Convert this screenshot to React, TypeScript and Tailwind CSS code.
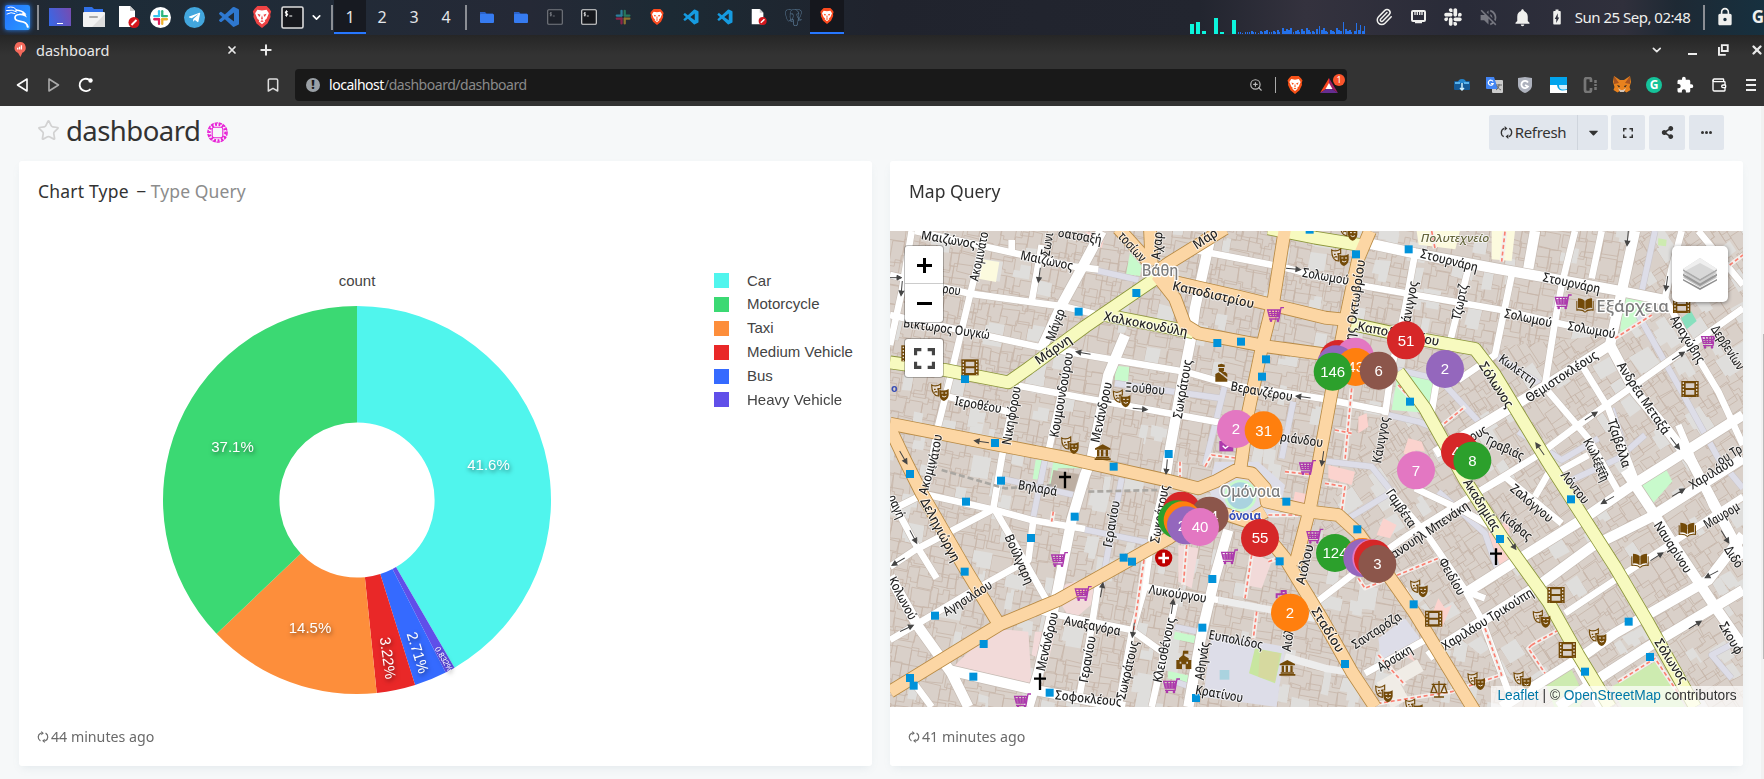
import React from "react";
import { FaSlack, FaTelegramPlane, FaPuzzlePiece, FaShareAlt, FaCaretDown } from "react-icons/fa";
import { SiPostgresql } from "react-icons/si";
import { BiLogoVisualStudio } from "react-icons/bi";
import { MdNotifications, MdLock, MdVolumeOff, MdBatteryChargingFull, MdExtension } from "react-icons/md";
import { Bookmark, ChevronDown, Paperclip, Star, Wallet, X, Plus, ZoomIn } from "lucide-react";

type Pt = [number, number];

/* ---------- top panel ---------- */

function Dragon() {
  return (
    <svg width="25" height="24" viewBox="0 0 25 24" fill="none" stroke="#fff" strokeLinecap="round">
      <path d="M3 2.500q6-2 9 3M1.500 5.500q6-1.500 10.500 1.500M2 9q4-2.500 8-.5" strokeWidth="1" />
      <path d="M11 5q6 .5 8.500 3.500l-2-.2q2 1.200 2.500 2.200-3-1.500-6-1-4 .5-4 3.300 0 3 5.500 3.500 6.500.7 7.500 5.700" strokeWidth="1.700" />
      <path d="M20 17q2.500 1.500 2.300 5" strokeWidth="1" />
    </svg>
  );
}

function SlackLogo({ size = 22, dim = false }: { size?: number; dim?: boolean }) {
  return (
    <svg width={size} height={size} viewBox="0 0 24 24" opacity={dim ? 0.55 : 1}>
      {!dim && <circle cx="12" cy="12" r="12" fill="#fff" />}
      <g transform={dim ? "translate(12 12) scale(1.3) translate(-12 -12)" : undefined}>
        <rect x="9" y="3.5" width="2.6" height="8" rx="1.300" fill="#36c5f0" />
        <rect x="3.5" y="9" width="8" height="2.6" rx="1.300" fill="#36c5f0" />
        <rect x="12.700" y="3.5" width="2.6" height="8" rx="1.300" fill="#2eb67d" />
        <rect x="12.700" y="9" width="8" height="2.6" rx="1.300" fill="#2eb67d" />
        <rect x="12.700" y="12.700" width="2.6" height="8" rx="1.300" fill="#ecb22e" />
        <rect x="12.700" y="12.700" width="8" height="2.6" rx="1.300" fill="#ecb22e" />
        <rect x="9" y="12.700" width="2.6" height="8" rx="1.300" fill="#e01e5a" />
        <rect x="3.5" y="12.700" width="8" height="2.6" rx="1.300" fill="#e01e5a" />
      </g>
    </svg>
  );
}

function Doc({ size = 22 }: { size?: number }) {
  return (
    <svg width={size} height={size} viewBox="0 0 22 22">
      <path d="M1 0h11l5 5v16H1z" fill="#fff" />
      <path d="M12 0v5h5z" fill="#ccc" />
      <circle cx="16" cy="16.500" r="5.500" fill="#d4161c" />
      <path d="M13.500 19l5-5" stroke="#fff" strokeWidth="2" />
    </svg>
  );
}

function Folder() {
  return (
    <svg width="14" height="12" viewBox="0 0 14 12">
      <path d="M0 1h5l1.500 1.500H13V5H0z" fill="#2b62c9" />
      <rect y="3" width="14" height="9" rx="1" fill="#367bf0" />
    </svg>
  );
}

function Terminal({ dim = false, big = false }: { dim?: boolean; big?: boolean }) {
  const s = big ? 23 : 16;
  return (
    <svg width={s} height={s} viewBox="0 0 16 16" opacity={dim ? 0.45 : 1}>
      <rect x=".7" y=".7" width="14.600" height="14.600" rx="1" fill="#16181d" stroke="#ddd" strokeWidth="1.100" />
      <path d="M4.800 4c-2-.8-2.300.9-1 1.200s1.200 1.700-1 1M3.800 3v4.500M5.800 7h2" stroke="#fff" strokeWidth=".7" fill="none" />
    </svg>
  );
}

function BraveLogo({ size, className }: { size: number; className: string }) {
  return (
    <svg width={size} height={size} viewBox="0 0 24 24" className={className}>
      <path d="M7 0h10l3 3 2 3-1 3 .3 3-3.300 7L12 24l-6-5L2.700 12 3 9 2 6l2-3z" fill="currentColor" />
      <path d="M7 4l5 1 5-1 2.500 4-2.500 6-2 1.500.5 1.500-3.500 3-3.500-3 .5-1.500L7 14 4.500 8z" fill="#fff" />
      <path d="M7 8.500l3.500 1L9 12zM17 8.500l-3.500 1L15 12zM12 10l1 4-1 1-1-1zM10 16.500l2-1 2 1-2 1z" fill="currentColor" />
    </svg>
  );
}

function Slot({ children, active = false }: { children: React.ReactNode; active?: boolean }) {
  return (
    <div className={active ? "flex h-[34px] w-[34px] items-center justify-center border-b-2 border-[#2777ff] bg-[#15171d]" : "flex h-[34px] w-[34px] items-center justify-center"}>
      {children}
    </div>
  );
}

const Sep = () => <div className="h-[25px] w-[2px] bg-[#8b8e94]" />;

const netBars = [1, 1, 0, 1, 1, 1, 2, 1, 1, 0, 2, 1, 2, 3, 1, 1, 2, 1, 3, 1, 5, 2, 4, 3, 5, 1, 2, 3, 1, 4, 2, 5, 3, 1, 2, 1, 4, 7, 3, 5, 2, 1, 3, 2, 1, 5, 3, 2, 11, 4, 2, 3, 1, 2, 10, 3, 8, 2, 7];

function TopPanel() {
  return (
    <div className="flex h-[35px] items-start bg-[linear-gradient(90deg,#232730_0%,#1d2c38_6%,#252936_30%,#1c2a34_38%,#20232d_50%,#22252f_68%,#34323e_74%,#292b38_83%,#30303c_92%,#1e2934_95%,#16303f_100%)]">
      <div className="flex h-[34px] w-[334px] items-center">
        <div className="ml-[5px] flex h-[25px] w-[25px] items-center justify-center rounded-[2px] bg-[linear-gradient(120deg,#2473ff,#2a9bff)] shadow-[0_0_5px_#2583fb]"><Dragon /></div>
        <div className="ml-[7px] mr-[10px]"><Sep /></div>
        <div className="flex h-[18px] w-[22px] items-end justify-center bg-[linear-gradient(70deg,#3569e8,#784bb0)] pb-[2px]"><div className="h-[1px] w-[6px] bg-white" /></div>
        <svg className="ml-[12px]" width="22" height="20" viewBox="0 0 22 20"><path d="M1 0h8l2 2h9v5H1z" fill="#3070e8" /><rect y="5" width="22" height="15" rx="1" fill="#f2f2f2" /><path d="M9 20L22 7v13z" fill="#ddd" /><rect x="6" y="9" width="9" height="2" rx="1" fill="#aaa" /></svg>
        <div className="ml-[13px]"><Doc /></div>
        <div className="ml-[10px]"><SlackLogo size={21} /></div>
        <div className="ml-[13px] flex h-[21px] w-[21px] items-center justify-center rounded-full bg-[#42a6dd] text-white"><FaTelegramPlane size={13} /></div>
        <div className="ml-[12px] text-[#2e78d0]"><BiLogoVisualStudio size={24} /></div>
        <div className="ml-[10px]"><BraveLogo size={22} className="text-[#ee4344]" /></div>
        <div className="ml-[8px]"><Terminal big /></div>
        <ChevronDown className="ml-[6px] text-white" size={13} strokeWidth={3} />
        <div className="ml-[8px]"><Sep /></div>
      </div>
      <div className="flex font-['Noto_Sans'] text-[16px] leading-[34px] text-[#e4e6ea]">
        <div className="h-[34px] w-8 border-b-2 border-[#2777ff] bg-[#171a21] text-center">1</div>
        <div className="w-8 text-center">2</div>
        <div className="w-8 text-center">3</div>
        <div className="w-8 text-center">4</div>
      </div>
      <div className="ml-[3px] flex h-[34px] items-center"><Sep /><div className="w-[3px]" />
        <Slot><Folder /></Slot><Slot><Folder /></Slot><Slot><Terminal dim /></Slot><Slot><Terminal /></Slot>
        <Slot><SlackLogo size={16} dim /></Slot>
        <Slot><BraveLogo size={16} className="text-[#fb4a1e]" /></Slot>
        <Slot><BiLogoVisualStudio size={18} className="text-[#169be0]" /></Slot>
        <Slot><BiLogoVisualStudio size={18} className="text-[#169be0]" /></Slot>
        <Slot><Doc size={16} /></Slot>
        <Slot><SiPostgresql size={17} className="text-[#5b7c98]" /></Slot>
        <Slot active><BraveLogo size={16} className="text-[#fb4a1e]" /></Slot>
      </div>
      <div className="ml-auto flex h-[34px] w-[575px] shrink-0 items-center overflow-hidden text-[#f0f0ee]">
        <svg width="178" height="34" viewBox="0 0 178 34" shapeRendering="crispEdges">
          {([[1, 10], [7, 12], [13, 3], [25, 16], [31, 2], [43, 14]] as Pt[]).map(([x, h]) => <rect key={x} x={x} y={34 - h} width="4" height={h} fill="#0cf5dc" />)}
          {netBars.map((h, i) => <rect key={i} x={Math.round(49 + i * 2.18)} y={33 - h} width={h > 1 && h < 6 ? 2 : 1} height={h + 1} fill="#2471ea" />)}
        </svg>
        <div className="flex w-[35px] justify-center"><Paperclip size={18} /></div>
        <div className="flex w-[34px] justify-center"><svg width="15" height="14" viewBox="0 0 15 14"><rect x="1" y="1" width="13" height="10" rx="1" fill="none" stroke="currentColor" strokeWidth="2" /><path d="M4 2v3M6.300 2v3M8.700 2v3M11 2v3M4 12.500h7" stroke="currentColor" strokeWidth="1.300" /></svg></div>
        <div className="flex w-[35px] justify-center"><FaSlack size={20} /></div>
        <div className="flex w-[35px] justify-center"><MdVolumeOff size={21} className="text-[#777881]" /></div>
        <div className="flex w-[34px] justify-center"><MdNotifications size={21} /></div>
        <div className="flex w-[34px] justify-center"><MdBatteryChargingFull size={18} /></div>
        <div className="ml-[1px] w-[128px] whitespace-nowrap font-['Noto_Sans'] text-[15px] tracking-[-0.5px]">Sun 25 Sep, 02:48</div>
        <Sep />
        <MdLock className="ml-[10px]" size={20} />
        <div className="ml-[17px] font-['Noto_Sans'] text-[17px] font-bold">G</div>
      </div>
    </div>
  );
}

/* ---------- browser chrome ---------- */

function Fox() {
  return (
    <svg width="18" height="17" viewBox="0 0 18 17">
      <path d="M1 0l6 4h4l6-4 1 6-1.500 5 1 3-4 2.500-3-2h-3l-3 2-4-2.500 1-3L0 6z" fill="#e8821e" />
      <path d="M1 0l5 7-5 1zM17 0l-5 7 5 1z" fill="#a85420" />
      <path d="M4 9l3 1-1 1.500zM14 9l-3 1 1 1.500zM7 14h4v1.500H7z" fill="#222" />
      <path d="M5 12l3 2h2l3-2-2 4H7z" fill="#d8c6b5" />
    </svg>
  );
}

function Browser() {
  return (
    <div className="h-[71px] overflow-hidden bg-[linear-gradient(#262626,#333_20px)] font-['Noto_Sans']">
      <div className="flex h-[31px] items-center pb-[2px] text-[#e8e8e8]">
        <svg className="ml-[14px]" width="12" height="15" viewBox="0 0 12 16"><path d="M6 0a6 6 0 0 1 2.500 11.500L6.500 16 4 11.600A6 6 0 0 1 6 0z" fill="#f4695b" /><path d="M3.500 8V6M5.500 8V5M7.500 8V3.500" stroke="#fff" strokeWidth="1.400" /></svg>
        <div className="ml-[10px] w-[190px] text-[14.500px] leading-[20px]">dashboard</div>
        <X size={12} strokeWidth={3.500} /><Plus className="ml-[20px]" size={16} strokeWidth={3} />
        <div className="ml-auto flex w-[116px] items-center">
          <ChevronDown size={14} strokeWidth={3} className="ml-[2px]" />
          <div className="ml-[24px] mt-[9px] h-[2px] w-[10px] bg-[#eee]" />
          <svg className="ml-[21px]" width="11" height="12" viewBox="0 0 11 12"><path d="M4 1h6v6H4zM1 3v8h7" fill="none" stroke="#eee" strokeWidth="2" /></svg>
          <X className="ml-[21px] shrink-0" size={14} strokeWidth={4} />
        </div>
      </div>
      <div className="flex h-[38px] items-center pb-[1px]">
        <svg className="ml-[16px]" width="80" height="16" viewBox="0 0 80 16" fill="none" strokeWidth="1.600" strokeLinejoin="round"><path d="M11 2v12L1.500 8z" stroke="#fff" /><path d="M33 2v12L42.500 8z" stroke="#aaa" /><path d="M74.500 12A6.200 6.200 0 1 1 73 2.600" stroke="#fff" strokeWidth="1.900" /><circle cx="74.500" cy="3.500" r="2.200" fill="#fff" /></svg>
        <Bookmark className="ml-[169px] text-[#ddd]" size={16} strokeWidth={2.300} />
        <div className="ml-[14px] flex h-8 w-[1052px] items-center rounded-[4px] bg-[#191919] text-[14px] text-[#8a8a8a]">
          <div className="ml-[11px] flex h-[14px] w-[14px] items-center justify-center rounded-full bg-[#9aa0a6] text-[12px] font-black leading-none text-[#191919]">!</div>
          <div className="ml-[9px] tracking-[-0.470px]"><span className="text-white">localhost</span>/dashboard/dashboard</div>
          <ZoomIn className="ml-auto text-[#bbb]" size={14} />
          <div className="ml-[12px] h-4 w-px bg-[#aaa]" />
          <div className="ml-[10px]"><BraveLogo size={18} className="text-[#f85218]" /></div>
          <div className="relative ml-[16px] mr-[9px]">
            <svg width="18" height="16" viewBox="0 0 18 16"><path d="M9 1L0 16 9 10z" fill="#fa4520" /><path d="M9 1l9 15L9 10z" fill="#9e1f63" /><path d="M0 16h18L9 10z" fill="#662d91" /><path d="M9 6l3.500 6h-7z" fill="#fff" /></svg>
            <div className="absolute -top-[3px] left-[13px] flex h-[12px] w-[12px] items-center justify-center rounded-full bg-[#fb542b] text-[9px] text-white">1</div>
          </div>
        </div>
        <div className="ml-[107px] flex items-center">
          <svg width="16" height="14" viewBox="0 0 16 14"><rect y="3" width="16" height="9" rx="1" fill="#155a97" /><path d="M4 5a4 4 0 0 1 8 0z" fill="#2384cc" /><path d="M1 5h5M10 5h5" stroke="#58b2ec" strokeWidth="2" /><path d="M8 5v7M6 10l2 2 2-2" stroke="#d0effc" strokeWidth="1.500" fill="none" /></svg>
          <svg className="ml-[16px]" width="17" height="16" viewBox="0 0 17 16"><rect x="6" y="3" width="11" height="13" rx="1" fill="#ccc" /><path d="M0 0h8l4 12H1a1 1 0 0 1-1-1z" fill="#4285f4" /><path d="M7 4.500a2.500 2.500 0 1 0 .2 2H5" fill="none" stroke="#fff" strokeWidth="1.200" /><path d="M10 8h6M13 7v1c0 3-2 4-3 5m1-4c1 2 2 3 4 4" stroke="#666" fill="none" /></svg>
          <svg className="ml-[15px]" width="14" height="16" viewBox="0 0 14 16"><path d="M0 1l7-1 7 1v7c0 4-3 6.500-7 8-4-1.500-7-4-7-8z" fill="#aeb2bd" /><path d="M10 5.500a3.600 3.600 0 1 0 0 4L7 8" stroke="#fff" strokeWidth="1.800" fill="none" /></svg>
          <svg className="ml-[18px]" width="17" height="16" viewBox="0 0 17 16"><rect width="17" height="16" fill="#02a4ec" /><path d="M0 8h7c1 6 5 6 10 5v3H0z" fill="#fff" /><path d="M9 8h8v4c-5 1-8 1-8-4z" fill="#fff" opacity=".8" /></svg>
          <svg className="ml-[16px]" width="15" height="16" viewBox="0 0 15 16"><path d="M8 5V3a2 2 0 0 0-2-2H4a2 2 0 0 0-2 2v10a2 2 0 0 0 2 2h2a2 2 0 0 0 2-2v-2" fill="none" stroke="#777" strokeWidth="2.700" /><path d="M12.500 3v3M12.500 7v2M12.500 10v3" stroke="#777" strokeWidth="2.500" /></svg>
          <div className="ml-[15px]"><Fox /></div>
          <div className="ml-[15px] flex h-[16px] w-[16px] items-center justify-center rounded-full bg-[#15c39a] text-[12px] font-bold leading-none text-white">G</div>
          <MdExtension className="ml-[14px] text-white" size={18} />
          <Wallet className="ml-[17px] text-white" size={16} />
          <svg className="ml-[18px] shrink-0" width="12" height="14" viewBox="0 0 12 14"><path d="M1 2h10M1 7h10M1 12h10" stroke="#eee" strokeWidth="2" /></svg>
        </div>
      </div>
    </div>
  );
}

/* ---------- shared pieces ---------- */

function Sync({ size = 14 }: { size?: number }) {
  return (
    <svg width={size} height={size} viewBox="0 0 14 14" fill="none" stroke="currentColor" strokeWidth="1.400">
      <path d="M4 11.500A5 5 0 0 1 4.500 2.500M10 2.500A5 5 0 0 1 9.500 11.500" />
      <path d="M5 0l3 2.600L5 5zM9 14l-3-2.600L9 9z" fill="currentColor" stroke="none" />
    </svg>
  );
}

const Corners = ({ size }: { size: number }) => (
  <svg width={size} height={size} viewBox="0 0 20 20" fill="none" stroke="currentColor" strokeWidth="3"><path d="M1.500 7V1.500H7M13 1.500h5.500V7M18.500 13v5.500H13M7 18.500H1.500V13" /></svg>
);

/* ---------- donut ---------- */

const slices = [
  { name: "Car", value: 41.6, color: "#50f5ed" },
  { name: "Heavy Vehicle", value: 0.832, color: "#604fe9" },
  { name: "Bus", value: 2.71, color: "#356aff" },
  { name: "Medium Vehicle", value: 3.22, color: "#e92828" },
  { name: "Taxi", value: 14.5, color: "#fd8e3b" },
  { name: "Motorcycle", value: 37.1, color: "#3bd973" },
];
const legend = [slices[0], slices[5], slices[4], slices[3], slices[2], slices[1]];
const sliceLabels: [string, number, number, number, number][] = [
  ["41.6%", 339, 175, 0, 15],
  ["37.1%", 83, 157, 0, 15],
  ["14.5%", 160.5, 338, 0, 15],
  ["3.22%", 238.5, 368, 82, 15],
  ["2.71%", 268.5, 362.5, 73, 15],
  ["0.832%", 294.5, 369, 59, 8],
];

function Donut() {
  const total = slices.reduce((s, d) => s + d.value, 0);
  let a = 0;
  const pt = (r: number, t: number) => `${(210 + r * Math.sin(t)).toFixed(2)} ${(210 - r * Math.cos(t)).toFixed(2)}`;
  return (
    <svg width="420" height="420" viewBox="0 0 420 420">
      {slices.map((s) => {
        const b = a + (s.value / total) * Math.PI * 2;
        const d = `M${pt(194, a)}A194 194 0 0 1 ${pt(194, b)}L${pt(77.600, b)}A77.600 77.600 0 0 0 ${pt(77.600, a)}Z`;
        a = b;
        return <path key={s.name} d={d} fill={s.color} />;
      })}
      <g className="font-['Liberation_Sans'] drop-shadow-[1px_2px_2px_rgba(0,0,0,0.5)]" fill="#fff" textAnchor="middle">
        {sliceLabels.map(([t, x, y, r, s]) => <text key={t} fontSize={s} transform={`translate(${x + 2.500} ${y}) rotate(${r})`} dy=".36em">{t}</text>)}
      </g>
    </svg>
  );
}

/* ---------- map ---------- */

const lav = ["630,135 760,165", "690,475 1010,520", "1020,480 960,720", "1225,530 1190,700", "345,760 590,815", "480,705 440,900", "710,760 650,1080", "580,910 800,955", "2310,18 2270,200", "2260,270 2390,500 2500,700 2574,790", "1830,390 1970,480", "1680,480 1790,600", "1540,435 1650,460", "1510,570 1600,590 1650,610", "1290,705 1460,725 1520,800", "1390,880 1530,795", "1660,800 1800,925 1840,1040", "2050,770 2200,700 2280,630", "2574,1240 2480,1290 2540,1360", "2180,550 2230,705", "870,1205 960,1225", "870,1370 930,1390", "2140,640 2030,705 1900,620"];
const minor = ["90,18 390,85 570,125 640,133", "470,60 440,230", "15,150 250,205 540,245 630,267", "15,270 340,340 480,370 570,385 900,440 1040,480 1320,522 1510,560", "300,30 255,210 200,440 160,600 140,705 120,800", "80,18 50,200 15,360", "400,482 600,520 760,548 1000,592", "560,370 530,500 490,680", "400,480 370,600 350,700 325,850", "190,515 370,560", "930,75 1190,125 1300,155 1450,185 1850,255 2020,295 2180,330", "1590,85 1560,250 1520,430 1500,570", "1750,130 1690,370", "1880,150 1830,390 1720,465", "2070,18 2030,180 2010,290 1980,480", "2150,18 2120,160", "2390,18 2360,130 2340,220", "380,45 380,85", "1660,440 1640,560", "130,810 330,855 440,885 600,912", "20,855 110,810", "15,1025 90,975 320,855", "15,815 90,955 155,1060", "330,855 400,975 490,1135", "445,885 430,1005 250,1105 100,1195 15,1245", "470,1160 740,1215 830,1280", "640,1075 620,1205 585,1405", "840,765 800,935 780,1085 740,1225 700,1446", "780,1085 1000,1125", "870,1135 800,1446", "80,1365 140,1446", "2090,420 2170,550 2250,760", "1990,500 2110,640 2200,800", "2440,18 2574,180", "2340,220 2440,400 2500,500 2574,660", "2574,250 2390,380 2080,600 1960,690 1700,850", "2574,815 2190,1065 2040,1165", "1860,755 2030,895", "1990,745 1950,815", "1510,795 1630,935 1740,1095 1790,1185 1870,1400", "1590,790 1740,860 1810,900", "1290,1135 1420,1035 1570,930 1740,825 1870,750", "1440,1345 1620,1245", "2010,745 2110,690", "2380,600 2480,840 2574,1000", "240,1420 200,1335", "1720,1090 1800,1120"];
const mid = ["650,18 590,130 530,240 470,370", "980,20 930,250 920,330 890,480 850,700 840,765", "720,330 670,450 620,700 600,750 560,885 515,1110 460,1345 430,1446", "15,1055 100,1205 200,1345 250,1446", "190,1335 450,1395 720,1446", "1030,915 990,1055 950,1225 910,1446", "1450,55 1590,85 1830,130 2190,195 2340,225", "1950,18 1930,130", "2250,18 2210,200 2175,360", "2175,360 2050,440 1890,540 1650,685", "2175,360 2250,500 2350,620 2420,710 2574,1000", "2574,570 2330,725 2250,775 2090,885 1890,1010 1740,1105", "2574,700 2300,875 2120,965 1970,1075 1670,1265 1630,1295", "2574,1095 2290,1265 2150,1355 2020,1446", "2574,930 2470,1065 2190,1225 2090,1295 1850,1446", "2220,735 2300,855 2370,965 2490,1145 2574,1265", "2080,1320 2150,1446"];
const yellow = ["15,412 180,435 370,472 430,430 600,305 820,155", "660,270 925,322", "1150,10 1290,38 1425,60", "1400,297 1620,345 1770,372 1830,450 1985,705 2190,1025 2290,1195 2430,1446", "1540,440 1620,550 1740,765 1850,935 1990,1130 2080,1290 2175,1446"];
const orange = ["15,596 250,642 550,700 840,765 940,790 990,770 1050,737 1100,745 1140,790 1145,830 1290,862 1360,870 1420,925 1520,1065 1590,1165 1770,1460", "15,610 60,705 110,805 240,1030 340,1195", "15,1400 345,1198 520,1125 850,940 980,850", "820,160 1060,215 1320,278 1390,285", "815,150 870,220 900,300 940,325 1150,365 1320,388 1400,405", "1200,10 1165,230 1130,370 1090,560 1065,740", "1020,10 850,115 800,150", "700,10 800,120", "795,10 800,120", "1455,18 1420,100 1380,290 1340,500 1305,690 1275,850 1230,1020", "1110,890 1200,1000 1310,1180 1400,1340 1470,1446", "1000,860 1090,890 1140,860"];
const redDash = ["1640,18 1650,70", "1860,20 1850,110", "1400,490 1380,705", "1350,615 1400,625", "1540,480 1660,610 1740,545", "1320,775 1380,785 1370,860", "1420,1060 1440,1090 1660,1000", "1800,1210 1850,1350 1700,1400 1450,1440", "1560,1090 1690,1330", "780,985 745,1225", "905,960 895,1080", "1100,990 1080,1120", "1115,1160 1105,1240", "960,725 980,690 1060,700", "1200,740 1290,750", "1940,1260 1930,1270 1980,1345", "1940,1260 2030,1210", "2200,1370 2310,1300 2390,1420", "885,710 885,755", "505,860 500,890", "2190,340 2300,270", "1150,870 1240,870", "1150,1010 1180,1000", "1480,1290 1560,1380", "2534,120 2574,90"];

const roadLabels: [string, number, number, number, number][] = [
  ["Μαιζώνος", 190, 44, 10, 165], ["Μαιζώνος", 485, 107, 12, 160], ["δατσαξή", 585, 34, 10, 132], ["Σωνι", 487, 57, -80, 70], ["Ακομινάτο", 283, 94, -78, 150], ["Μάγερ", 512, 300, -70, 100],
  ["Μάρνη", 505, 375, -35, 125], ["Χαλκοκονδύλη", 782, 298, 11, 255], ["Καποδιστρίου", 985, 210, 13, 250], ["Μάρ", 961, 42, -33, 80], ["τοσίων", 741, 66, 48, 105], ["Αχαρ", 817, 62, -85, 82],
  ["Βίκτωρος Ουγκώ", 185, 312, 8, 262], ["ρου", 200, 195, 8, 55], ["Ιεροθέου", 280, 540, 10, 142], ["Νικηφόρου", 380, 572, -80, 178], ["Κουμουνδούρου", 530, 510, -80, 258], ["Μενάνδρου", 650, 562, -78, 185],
  ["Ξούθου", 780, 492, 5, 120], ["Σωκράτους", 893, 492, -80, 178], ["Βερανζέρου", 1130, 500, 10, 188], ["ριάνδου", 1250, 645, 8, 130], ["ινάτου", 150, 680, -80, 105], ["Στουρνάρη", 1693, 107, 14, 176], ["Στουρνάρη", 2060, 175, 12, 175],
  ["Σολωμού", 1322, 155, 10, 142], ["κάνιγγος", 1573, 240, -80, 145], ["Τζωρτζ", 1725, 232, -78, 108], ["Σολωμού", 1930, 280, 12, 145], ["Σολωμού", 2120, 315, 10, 145], ["Αραχώβης", 2408, 343, 58, 160],
  ["Δερβενίων", 2528, 368, 57, 150], ["Καποδιστρίου", 1540, 327, 11, 250], ["ης Οκτωβρίου", 1411, 225, -82, 245], ["Κωλέττη", 1898, 435, 36, 130], ["Σόλωνος", 1833, 480, 57, 155], ["Θεμιστοκλέους", 2030, 455, -33, 250],
  ["Ανδρέα Μεταξά", 2275, 520, 56, 252], ["Τζαβέλλα", 2202, 655, 72, 150], ["Κωλέττη", 2135, 700, 62, 130], ["Γραβιάς", 1860, 670, 24, 120], ["ους", 1780, 625, -30, 55], ["Κάνιγγος", 1488, 645, -80, 140],
  ["Βηλαρά", 458, 790, 10, 118], ["Ακομιν", 128, 755, -75, 110], ["Δεληγιώργη", 165, 915, 62, 210], ["Βούλγαρη", 402, 1003, 66, 160], ["Γερανίου", 680, 897, -80, 142], ["Σωκράτους", 825, 867, -80, 175],
  ["Αγησιλάου", 248, 1120, -32, 165], ["Κολωνού", 52, 1120, 62, 140], ["Αναξαγόρα", 622, 1203, 11, 172], ["Λυκούργου", 878, 1107, 9, 175], ["Μενάνδρου", 487, 1250, -77, 180], ["Γερανίου", 608, 1303, -80, 142],
  ["Σωκράτους", 728, 1335, -77, 178], ["Κλεισθένους", 838, 1275, -78, 198], ["Αθηνάς", 952, 1308, -82, 115], ["Ευπολίδος", 1052, 1245, 11, 165], ["Κρατίνου", 1003, 1407, 10, 145], ["Σοφοκλέους", 610, 1421, 6, 200],
  ["Αιόλου", 1260, 1018, -77, 123], ["Αιόλ", 1210, 1245, -82, 70], ["Σταδίου", 1328, 1215, 58, 150], ["Σανταρόζα", 1475, 1217, -33, 168], ["Αρσάκη", 1530, 1300, -31, 115], ["Γαμβέτα", 1548, 850, 56, 130],
  ["ανουήλ Μπενάκη", 1635, 915, -34, 275], ["Φειδίου", 1700, 1055, 60, 122], ["Χαριλάου Τρικούπη", 1808, 1183, -32, 315], ["Ακαδημίας", 1790, 840, 58, 175], ["Κιάφας", 1893, 903, 39, 112], ["Ζαλόγγου", 1940, 835, 40, 155],
  ["Λόντου", 2070, 788, 52, 112], ["έττη", 2148, 740, 65, 62], ["Χαριλάου", 2480, 745, -31, 150], ["Μαυρομ", 2510, 872, -31, 118], ["Ναυαρίνου", 2363, 967, 57, 175], ["Διδό", 2546, 996, 57, 70], ["Σκουφ", 2538, 1240, 60, 105],
  ["Σόλωνος", 2358, 1308, 57, 150], ["ου Τρ", 2534, 690, -32, 80], ["ραγή", 34, 845, 66, 75],
];

const stops: Pt[] = [[754, 204], [581, 260], [240, 462], [997, 354], [1068, 350], [1143, 403], [1131, 455], [330, 654], [851, 687], [1274, 14], [1413, 88], [1571, 73], [1575, 530], [75, 747], [348, 767], [243, 830], [569, 875], [438, 939], [239, 1040], [716, 998], [741, 1010], [1204, 830], [1184, 1009], [982, 1062], [952, 1208], [150, 1172], [296, 1257], [75, 1359], [86, 1382], [265, 1355], [494, 1403], [933, 1419], [686, 725], [1417, 913], [1845, 942], [2058, 823], [1586, 1138], [1380, 1317], [2231, 1190], [2295, 1296], [2100, 1340]];
const carts: Pt[] = [[1172, 268], [2035, 230], [2474, 348], [524, 1003], [595, 1105], [1034, 995], [1290, 933], [1268, 727], [860, 1382], [413, 1427]];
const theatres: Pt[] = [[165, 503], [710, 522], [555, 662], [1365, 98], [1391, 22], [1602, 1092], [1970, 1183], [2138, 1238], [1774, 1370], [1912, 1367], [1497, 1407], [1587, 1449]];
const films: Pt[] = [[255, 427], [75, 385], [2390, 240], [2415, 492], [2013, 1110], [1646, 1181], [2047, 1275]];
const books: Pt[] = [[2100, 242], [2407, 915], [2265, 1008]];
const crosses: Pt[] = [[540, 765], [465, 1370], [1833, 995]];
const arrows: [number, number, number][] = [[28, 158, 0], [50, 190, 95], [463, 150, 98], [595, 384, 190], [765, 552, 5], [290, 650, 188], [1225, 132, 5], [1255, 516, 187], [55, 697, 60], [85, 935, 62], [40, 1010, 150], [65, 1210, -25], [650, 1095, -80], [862, 1145, -82], [745, 1215, 98], [845, 725, 95], [1965, 672, 235], [2228, 40, 95], [2345, 175, 98], [2380, 393, -33], [2118, 573, -33], [2370, 655, 52], [2380, 803, -31], [2168, 825, 150], [2520, 935, 58], [2315, 995, -32], [2480, 1048, 152], [2430, 1200, -32], [1880, 955, 55], [1313, 700, 98]];

const markers: [string, number, number, string][] = [
  ["", 1360, 402, "#d62728"], ["", 1410, 395, "#e377c2"], ["", 1353, 418, "#9467bd"], ["43", 1412, 426, "#ff7f0e"], ["146", 1343, 440, "#2ca02c"], ["6", 1481, 437, "#8c564b"],
  ["51", 1563, 346, "#d62728"], ["2", 1680, 432, "#9467bd"], ["2", 1053, 612, "#e377c2"], ["31", 1136, 616, "#ff7f0e"], ["41", 1725, 680, "#d62728"], ["8", 1762, 707, "#2ca02c"], ["7", 1593, 736, "#e377c2"],
  ["", 890, 857, "#d62728"], ["24", 974, 872, "#8c564b"], ["", 876, 883, "#2ca02c"], ["", 893, 886, "#ff7f0e"], ["22", 903, 901, "#9467bd"], ["40", 945, 906, "#e377c2"], ["55", 1125, 939, "#d62728"],
  ["124", 1350, 984, "#2ca02c"], ["", 1433, 996, "#ff7f0e"], ["", 1432, 999, "#9467bd"], ["", 1459, 1000, "#e377c2"], ["", 1464, 1001, "#d62728"], ["3", 1477, 1017, "#8c564b"], ["2", 1215, 1163, "#ff7f0e"],
];

function rand(seed: number) {
  const v = Math.sin(seed * 127.1 + 311.7) * 43758.5453;
  return v - Math.floor(v);
}

/* Rows of irregular building footprints with notches, courtyards and skewed walls */
function Buildings({ cols, rows }: { cols: number; rows: number }) {
  const out: string[] = [];
  const grey: string[] = [];
  for (let r = 0; r < rows; r++) {
    let x = -rand(r) * 60;
    for (let c = 0; c < cols; c++) {
      const s = r * 191 + c;
      const w = 20 + rand(s) * 46;
      const h = 36 + rand(s + 7) * 34;
      const y = r * 46 + rand(s + 3) * 22;
      const k = 8 + rand(s + 5) * 16;
      const j = (rand(s + 23) - 0.5) * 9;
      const n = [x, y, w, h, k, j].map(Math.round);
      const kind = rand(s + 11);
      const d = kind > 0.6
        ? `M${n[0]} ${n[1]}l${n[2]} ${n[5]}l${n[5]} ${n[3]}h${n[4] - n[2]}v${-n[4]}h${-n[4]}z`
        : kind > 0.35
          ? `M${n[0] + n[4]} ${n[1]}h${n[2] - n[4]}v${n[3]}h${-n[2]}v${n[4] - n[3]}h${n[4]}z`
          : `M${n[0]} ${n[1]}l${n[2]} ${n[5]}v${n[3]}l${-n[2]} ${-n[5]}z`;
      if (rand(s + 19) > 0.88) grey.push(d);
      else out.push(d);
      x += w + (rand(s + 29) > 0.9 ? 8 : 0);
    }
  }
  return (
    <>
      <path d={out.join("")} fill="#d9d0c9" stroke="#c7b6aa" strokeWidth="2.300" />
      <path d={grey.join("")} fill="#dfdedc" />
    </>
  );
}

const Lines = ({ data, color, width, dash }: { data: string[]; color: string; width: number; dash?: string }) => (
  <g fill="none" stroke={color} strokeWidth={width} strokeLinejoin="round" strokeDasharray={dash}>{data.map((p) => <polyline key={p} points={p} />)}</g>
);

function CityMap() {
  const at = ([x, y]: Pt) => `translate(${x} ${y})`;
  return (
    <svg className="block" width="853" height="476" viewBox="15 18 2559 1428">
      <defs>
        <clipPath id="east"><path d="M1770 372L2175 330 2250 18H2600V1460H2000L1300 900 1560 440z" /></clipPath>
      </defs>
      <rect x="0" y="0" width="2600" height="1460" fill="#dad2cb" />
      <g transform="rotate(10 1200 700) translate(-350 -350)"><Buildings cols={86} rows={46} /></g>
      <g clipPath="url(#east)"><rect width="2600" height="1460" fill="#dad2cb" /><g transform="translate(700 1000) rotate(-33)"><Buildings cols={60} rows={44} /></g></g>
      <g fill="#f2dad9">
        <path d="M325 1210L430 1220 440 1380 205 1325zM880 960l60 10-20 120-40-20zM500 1090l110-30 30 60-80 70zM450 1220h60l-20 90-50-20zM1100 980l60 30-30 80-50-10z" />
        <path d="M1420 575l25-10 5 40-30 20zM1570 640l40 10 10 30-30-5 25 40-60-30zM1495 880l40 20-20 40-40-10zM1660 1120l20 30 20-10-30 70-30-40zM1810 925l60-40 10 120-50 20zM1230 800l50 10-10 60-50-20zM1550 1230l40 80-50-30zM600 20l60 10-10 40zM1330 720l80 20-10 40-70-20z" fill="#fbd3ce" />
      </g>
      <g fill="#c8facc">
        <path d="M735 83l35 40-5 30-42-5zM693 422l40 4-4 44-40-5zM452 705h28l-12 60-25-3zM505 710h90l-6 20h-70l-10 60-18-2zM870 1220l75 15-4 22-75-15zM850 1338l65 14-5 22-62-14zM2265 775l75-48 22 42-60 68zM2215 205l90 5-10 50-90 65zM1540 435l105 20-5 110-120-10z" />
        <path d="M2320 40l25 4-2 20-24-3zM1980 1370l80-35 40 80-20 35h-70zM2180 1385l140-80 80 141h-190z" fill="#cdebb0" />
      </g>
      <path d="M290 103l53 8-10 60-52-10zM1595 18h130l-14 55-110-14zM1820 18h70l-10 90-60-5z" fill="#fcfade" />
      <path d="M2388 280l30-22 17 30-30 25z" fill="#88e0be" />
      <path d="M980 1225l220 40-25 181-220-30zM1480 1240l80-60 45 60-115 75zM990 710h130l80 70-20 100-180-20-30-70z" fill="#dddde8" />
      <path d="M1110 1270l80 15-20 90-78-30z" fill="#c8e6a0" /><path d="M1125 1275l60 10-15 85-50-15z" fill="#d6d99f" />
      <rect x="1004" y="1335" width="29" height="29" fill="#aad3df" />
      <path d="M505 735l85 15-18 65-80-14z" fill="#bcaea2" />
      <g transform="translate(1600 1370) rotate(-30)"><path d="M-110-60h140v40H-50v50h-60z" fill="#f0ece6" /></g>
      <Lines data={lav} color="#c9c5c9" width={20} /><Lines data={lav} color="#dddde8" width={17} />
      <Lines data={minor} color="#c5bbb3" width={23} /><Lines data={mid} color="#c5bbb3" width={35} />
      <Lines data={minor} color="#fff" width={20} /><Lines data={mid} color="#fff" width={31} />
      <Lines data={["1000,1125 1160,1155 1290,1180", "1200,1295 1320,1330 1420,1345"]} color="#ededed" width={22} />
      <Lines data={redDash} color="#f3efec" width={13} /><Lines data={redDash} color="#fa8072" width={5} dash="12 8" />
      <Lines data={["170,735 360,790 500,780", "610,800 820,795"]} color="#aaa7a2" width={8} dash="18 9" />
      <circle cx="1066" cy="815" r="63" fill="#dddde8" /><circle cx="1066" cy="812" r="44" fill="#aad3df" stroke="#c8facc" strokeWidth="8" />
      <Lines data={yellow} color="#8c963a" width={41} /><Lines data={orange} color="#b98b45" width={41} />
      <Lines data={yellow} color="#f7fabf" width={36} /><Lines data={orange} color="#fcd6a4" width={36} />
      {arrows.map(([x, y, r]) => <path key={`${x}-${y}`} transform={`translate(${x} ${y}) rotate(${r})`} d="M-22 0H10M8-7L22 0 8 7z" fill="#444" stroke="#444" strokeWidth="3" />)}
      <g fill="#0092da">{stops.map((p) => <rect key={p.join()} x={p[0] - 12} y={p[1] - 12} width="24" height="24" />)}</g>
      {carts.map((p) => <g key={p.join()} transform={at(p)} fill="none" stroke="#ac39ac" strokeWidth="4"><path d="M25-20h-9l-6 34h-30M-24-13h37l-5 20h-27zM-22-5h34M-20 1h30M-13-12l3 18M-3-12v18M6-12l-1 18" /><circle cx="-14" cy="19" r="2" /><circle cx="7" cy="19" r="2" /></g>)}
      {theatres.map((p) => <g key={p.join()} transform={at(p)}><path d="M-25-23q13 7 27-3v14h-7v22q-20-2-20-33z" fill="#e7ddd4" stroke="#734a08" strokeWidth="3.500" /><path d="M-18-10h5M-9-11h5M-17 0q5-6 9-1" stroke="#734a08" strokeWidth="3.500" fill="none" /><path d="M-2-9q14 6 28-2v18q-2 14-14 18-12-3-14-18z" fill="#734a08" /><path d="M4 1h6M15 1h6M6 10q6 6 13 0" stroke="#f0e8e0" strokeWidth="3" fill="none" /></g>)}
      {films.map((p) => <g key={p.join()} transform={at(p)}><path d="M-26-24H26V24H-26z" fill="#734a08" /><path d="M-13-17h26V-3h-26zM-13 3h26v14h-26z" fill="#d9d0c9" /><path d="M-20-20V22M20-20V22" stroke="#e8e0d8" strokeWidth="4" strokeDasharray="5 5" /></g>)}
      {books.map((p) => <g key={p.join()} transform={at(p)} fill="#734a08"><path d="M-21-22q14 0 20 8v27q-8-8-20-6zM21-22Q7-22 1-14v27q8-8 20-6zM-26-14v29q18-2 26 6 8-8 26-6v-29h-3V11Q6 10 0 18-6 10-23 11v-25z" /></g>)}
      {crosses.map((p) => <path key={p.join()} transform={at(p)} d="M0-25V25M-18-9H18" stroke="#000" strokeWidth="7" />)}
      {([[653, 682], [1207, 1329]] as Pt[]).map((p) => <g key={p.join()} transform={at(p)} fill="#734a08"><path d="M-23-12L0-24 23-12v4h-46zM-24 18h48v5h-48zM-20 13h40v4h-40zM-17-7h7v19h-7zM-5-7h7v19h-7zM9-7h7v19H9z" /></g>)}
      <path transform="translate(896 1310)" d="M-2-33h16v9H2v6l13 8v5h8V22H6V8h-11v14h-17V-5h8v-5l11-9zM-12 0v6h5V0zM8 0v6h5V0z" fill="#734a08" fillRule="evenodd" />
      <g transform="translate(1009 445)" fill="#734a08"><path d="M-10-26l10-3 10 3v7h-20zM-8-16H8v9q-8 7-16 0zM-18 25V2L-8-3 18 18v7zM-3-4H12l6 6v10z" /></g>
      <g transform="translate(1662 1393)" fill="none" stroke="#734a08" strokeWidth="4"><path d="M0-25V21M-15 23h30M-22-15h44M-16-14l-8 24h18zM16-14L6 10h18z" /></g>
      <circle cx="836" cy="999" r="26" fill="#bf0000" /><path d="M836 983v32M820 999h32" stroke="#fff" strokeWidth="8" />
      <path d="M1003 648v31h42v-31z" fill="#ac39ac" /><path d="M1013 662l8 8 10-8" stroke="#fff" strokeWidth="4" fill="none" />
      <path d="M1175 1120v-12h28v18M1190 1108v-10h12v10" stroke="#ac39ac" fill="none" strokeWidth="6" />
      <g className="font-['Noto_Sans']" textAnchor="middle" strokeLinejoin="round" paintOrder="stroke">
        <g fill="#222" stroke="#ffffffb0" strokeWidth="6" fontSize="39" fontWeight="500">
          {roadLabels.map(([t, x, y, r, w], i) => <text key={i} transform={`translate(${x} ${y}) rotate(${r})`} dy=".32em" textLength={w} lengthAdjust="spacingAndGlyphs">{t}</text>)}
        </g>
        <g fill="#7d7d7d" stroke="#fff" strokeWidth="8" fontSize="46" fontWeight="500">
          <text x="825" y="153" textLength="110" lengthAdjust="spacingAndGlyphs">Βάθη</text><text x="2243" y="260" textLength="218" lengthAdjust="spacingAndGlyphs">Εξάρχεια</text><text x="1095" y="817" textLength="182" lengthAdjust="spacingAndGlyphs">Ομόνοια</text>
        </g>
        <text x="1080" y="884" fontSize="36" fontWeight="700" fill="#3a4fb5" stroke="#fff" strokeWidth="5" textLength="98">όνοια</text>
        <text x="28" y="501" fontSize="32" fontWeight="700" fill="#3a4fb5">ο</text>
        <text x="1710" y="50" fontSize="34" fontStyle="italic" fontWeight="500" fill="#66663c" stroke="#ffffffb0" strokeWidth="5" textLength="206" lengthAdjust="spacingAndGlyphs">Πολυτεχνείο</text>
      </g>
      <g className="font-['Liberation_Sans']" fontSize="45" textAnchor="middle" fill="#fff">
        {markers.map(([t, x, y, c]) => <g key={`${x}-${y}`}><circle cx={x} cy={y} r="57" fill={c} /><text x={x} y={y + 16}>{t}</text></g>)}
      </g>
    </svg>
  );
}

function Layers() {
  return (
    <svg width="36" height="36" viewBox="0 0 36 36">
      <path d="M1 23l17 9 17-9v1.500L18 34 1 24.500z" fill="#8f8f8f" /><path d="M18 12l17 9.500-17 10L1 21.500z" fill="#c9c9c9" />
      <path d="M1 17.500l17 10 17-10V20L18 30 1 20z" fill="#999" /><path d="M18 7l17 10-17 10L1 17z" fill="#cfcfcf" />
      <path d="M1 13l17 10 17-10v2L18 25 1 15z" fill="#aaa" /><path d="M18 2l17 11-17 10L1 13z" fill="#d8d8d8" /><path d="M18 2l17 11-3 1.500L18 7 4 14.500 1 13z" fill="#efefef" />
    </svg>
  );
}

function Identicon() {
  return (
    <svg className="mb-[1px] ml-[7px]" width="21" height="21" viewBox="0 0 21 21" fill="none" stroke="#e71fd6">
      <circle cx="10.500" cy="10.500" r="9.600" strokeWidth="1.400" strokeDasharray="3.400 .8" />
      <circle cx="10.500" cy="10.500" r="8" strokeWidth="2.400" strokeDasharray="1.900 1.600" />
      <rect x="5.200" y="5.200" width="10.600" height="10.600" rx="2" strokeWidth="1.100" fill="#f6f8f9" />
    </svg>
  );
}

function Card({ title, age, children }: { title: React.ReactNode; age: string; children: React.ReactNode }) {
  return (
    <section className="flex h-[605px] w-[853px] flex-col rounded-[3px] bg-white shadow-[0_4px_9px_-3px_rgba(102,136,153,0.15)]">
      <h2 className="h-[70px] pl-[19px] pt-[18px] text-[17.500px] leading-[24px] text-[#323232]">{title}</h2>
      <div className="h-[476px]">{children}</div>
      <div className="flex items-center gap-[2px] pl-[18px] pt-[19px] text-[14.200px] leading-[22px] text-[#6a6a6a]"><Sync size={12} />{age}</div>
    </section>
  );
}

const buttonBase = "flex h-[35px] items-center justify-center bg-[#e1e6ed] text-[#333]";

export default function App() {
  return (
    <div className="h-[779px] w-[1764px] overflow-hidden bg-[#f6f8f9]">
      <TopPanel />
      <Browser />
      <div className="flex h-[673px] font-['Noto_Sans']">
        <main className="w-[1761px] pl-[19px]">
          <header className="flex h-[55px] items-center pb-[2px]">
            <Star className="mb-[4px] ml-[18px] text-[#d2d2d2]" size={23} strokeWidth={1.800} />
            <h1 className="mb-[3px] ml-[6px] text-[27.500px] leading-none tracking-[-0.550px] text-[#323232]">dashboard</h1>
            <Identicon />
            <div className="ml-auto mr-[37px] flex">
              <div className={`${buttonBase} w-[89px] gap-[2px] rounded-l-[2px] border-r border-[#cfd5dd] text-[15px] tracking-[-0.300px]`}><Sync size={13} />Refresh</div>
              <div className={`${buttonBase} mr-[3px] w-[30px] rounded-r-[2px]`}><FaCaretDown size={15} /></div>
              <div className={`${buttonBase} mr-[4px] w-[34px] rounded-[2px]`}><Corners size={10} /></div>
              <div className={`${buttonBase} mr-[4px] w-[36px] rounded-[2px]`}><FaShareAlt size={13} /></div>
              <div className={`${buttonBase} w-[35px] gap-[1px] rounded-[2px]`}><i className="size-[3px] rounded-full bg-[#333]" /><i className="size-[3px] rounded-full bg-[#333]" /><i className="size-[3px] rounded-full bg-[#333]" /></div>
            </div>
          </header>
          <div className="flex gap-[18px]">
            <Card title={<><span className="mr-[3px] tracking-[0.200px]">Chart Type</span> − <span className="tracking-[0.100px] text-[#8c8c8c]">Type Query</span></>} age="44 minutes ago">
              <div className="flex h-full font-['Liberation_Sans'] text-[15px] text-[#444]">
                <div className="ml-[128px] flex w-[420px] flex-col items-center pt-[41px]">
                  <div className="h-[18px] leading-[18px]">count</div>
                  <div className="-mb-6"><Donut /></div>
                </div>
                <ul className="ml-[147px] pt-[38px]">
                  {legend.map((s) => (
                    <li key={s.name} className="flex h-[23.800px] items-center whitespace-nowrap">
                      <svg className="mr-[18px]" width="15" height="15"><rect width="15" height="15" fill={s.color} /></svg>{s.name}
                    </li>
                  ))}
                </ul>
              </div>
            </Card>
            <Card title="Map Query" age="41 minutes ago">
              <div className="relative h-full overflow-hidden">
                <CityMap />
                <div className="absolute left-[15px] top-[15px] w-[38px] divide-y divide-[#ccc] rounded-[3px] bg-white text-black shadow-[0_0_0_1px_rgba(0,0,0,0.25)]">
                  <div className="flex h-[38px] items-center justify-center pt-[2px]"><svg width="15" height="15"><path d="M7.500 0v15M0 7.500h15" stroke="#000" strokeWidth="3" /></svg></div>
                  <div className="flex h-[38px] items-center justify-center"><svg width="15" height="15"><path d="M0 7.500h15" stroke="#000" strokeWidth="3" /></svg></div>
                </div>
                <div className="absolute left-[15px] top-[108px] flex h-[38px] w-[38px] items-center justify-center rounded-[3px] bg-white text-[#444] shadow-[0_0_0_1px_rgba(0,0,0,0.25)]"><Corners size={21} /></div>
                <div className="absolute right-[15px] top-[15px] flex h-[56px] w-[56px] items-center justify-center rounded-[5px] bg-white shadow-[0_1px_4px_rgba(0,0,0,0.45)]"><Layers /></div>
                <div className="absolute bottom-0 right-0 h-[21px] w-[252px] whitespace-nowrap bg-white/70 text-center font-['Liberation_Sans'] text-[13.750px] leading-[19px] text-[#333]"><span className="text-[#0078a8]">Leaflet</span> | © <span className="text-[#0078a8]">OpenStreetMap</span> contributors</div>
              </div>
            </Card>
          </div>
        </main>
        <div className="flex w-[3px] justify-end bg-[#f1f1f1] pt-[228px]"><div className="h-[325px] w-px bg-[#b8b8b8]" /></div>
      </div>
    </div>
  );
}
